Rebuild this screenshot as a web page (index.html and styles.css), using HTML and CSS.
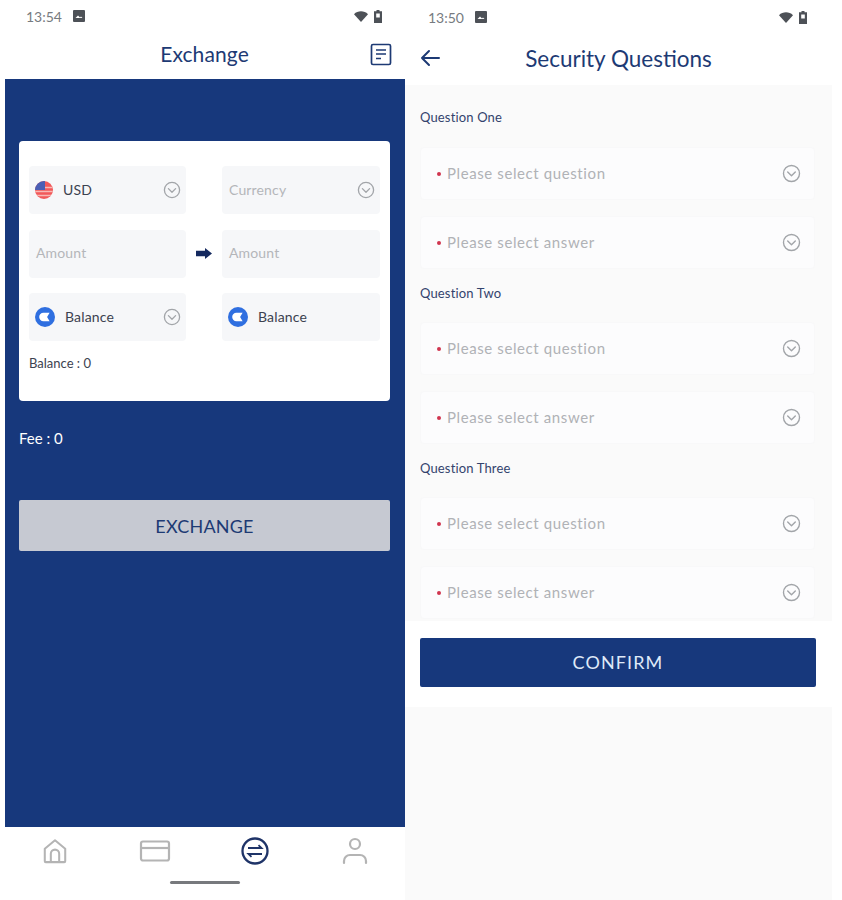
FILE: index.html
```html
<!DOCTYPE html>
<html lang="en">
<head>
  <meta charset="UTF-8" />
  <meta name="viewport" content="width=device-width, initial-scale=1" />
  <title>Exchange and Security Questions</title>
  <link rel="stylesheet" href="styles.css">
</head>
<body>
  <svg class="defs" width="0" height="0">
    <symbol id="chev" viewBox="0 0 18 18">
      <circle cx="9" cy="9" r="7.6" fill="none" stroke="currentColor" stroke-width="1.3"/>
      <path d="M5.4 7.6 9 11.2l3.6-3.6" fill="none" stroke="currentColor" stroke-width="1.3" stroke-linecap="round" stroke-linejoin="round"/>
    </symbol>
    <symbol id="coin" viewBox="0 0 20 20">
      <circle cx="10" cy="10" r="10" fill="#2f6fe0"/>
      <path d="M14.6 5.8H8.4a4.2 4.2 0 0 0 0 8.4h6.2l-2.5-4.2z" fill="#fff"/>
    </symbol>
    <symbol id="wifi" viewBox="0 0 14 11">
      <path d="M0 3.2C3.8-.6 10.200-.6 14 3.200L7 11z" fill="currentColor"/>
    </symbol>
    <symbol id="battery" viewBox="0 0 8 13">
      <path d="M2.500 0h3v1.300H8V13H0V1.300h2.500z" fill="currentColor"/>
      <rect x="2.200" y="3.500" width="3.600" height="4" fill="#fff"/>
    </symbol>
    <symbol id="picture" viewBox="0 0 12 12">
      <path d="M1 0h10a1 1 0 0 1 1 1v10a1 1 0 0 1-1 1H1a1 1 0 0 1-1-1V1a1 1 0 0 1 1-1z" fill="currentColor"/>
      <path d="M2.500 8 5 5.500 7 7.500l1-1L9.500 8z" fill="#fff"/>
    </symbol>
  </svg>

  <div class="screen screen-exchange">
    <div class="status status-left">
      <span class="time">13:54</span>
      <svg class="status-pic"><use href="#picture"/></svg>
      <span class="status-gap"></span>
      <svg class="status-wifi"><use href="#wifi"/></svg>
      <svg class="status-bat"><use href="#battery"/></svg>
    </div>
    <div class="topbar">
      <h1 class="title title-small">Exchange</h1>
      <svg class="record-icon" width="22" height="23" viewBox="0 0 22 23">
        <rect x="1.500" y="1.500" width="19" height="20" rx="1.500" fill="none" stroke="#1d3a74" stroke-width="1.700"/>
        <path d="M6 7h10M6 11h10M6 15.500h5" stroke="#1d3a74" stroke-width="1.500"/>
      </svg>
    </div>

    <main class="blue">
      <div class="card">
        <div class="swap-grid">
          <div class="field">
            <svg class="flag" width="18" height="18" viewBox="0 0 18 18">
              <defs><clipPath id="round"><circle cx="9" cy="9" r="9"/></clipPath></defs>
              <g clip-path="url(#round)">
                <rect width="18" height="18" fill="#f2595a"/>
                <path d="M0 6.500h18M0 10.500h18M0 14.500h18" stroke="#f7b9b5" stroke-width="1.300"/>
                <rect width="10" height="9" fill="#4a5fb5"/>
              </g>
            </svg>
            <span class="value">USD</span>
            <svg class="chev"><use href="#chev"/></svg>
          </div>
          <span></span>
          <div class="field">
            <span class="hint">Currency</span>
            <svg class="chev"><use href="#chev"/></svg>
          </div>

          <div class="field"><span class="hint">Amount</span></div>
          <svg class="arrow" width="16" height="11" viewBox="0 0 16 11">
            <path d="M0 2.800h9V0l7 5.500-7 5.500V8.200H0z" fill="#14295f"/>
          </svg>
          <div class="field"><span class="hint">Amount</span></div>

          <div class="field">
            <svg class="coin"><use href="#coin"/></svg>
            <span class="value">Balance</span>
            <svg class="chev"><use href="#chev"/></svg>
          </div>
          <span></span>
          <div class="field">
            <svg class="coin"><use href="#coin"/></svg>
            <span class="value">Balance</span>
          </div>
        </div>
        <div class="balance">Balance : 0</div>
      </div>

      <div class="fee">Fee : 0</div>
      <button class="btn-exchange">EXCHANGE</button>
    </main>

    <nav class="bottom-nav">
      <div class="tabs">
        <svg width="26" height="28" viewBox="0 0 28 28" fill="none" stroke="#b4b4b4" stroke-width="2.200" stroke-linejoin="round">
          <path d="M3 11.500 14 2.500l11 9V25a1 1 0 0 1-1 1H4a1 1 0 0 1-1-1z"/>
          <path d="M9.500 26V17a4.500 4.500 0 0 1 9 0v9"/>
        </svg>
        <svg width="32" height="24" viewBox="0 0 32 24" fill="none" stroke="#b4b4b4" stroke-width="2.200">
          <rect x="2" y="2.500" width="28" height="19" rx="2"/>
          <path d="M2 9h28"/>
        </svg>
        <svg width="28" height="28" viewBox="0 0 28 28" fill="none" stroke="#1f3468" stroke-width="2">
          <circle cx="14" cy="14" r="12.500" stroke-width="2.300"/>
          <path d="M7 11h13.500l-3-2.800M21 17H7.500l3 2.800" stroke-width="1.800"/>
        </svg>
        <svg width="26" height="28" viewBox="0 0 26 28" fill="none" stroke="#b4b4b4" stroke-width="2.200">
          <circle cx="13" cy="7" r="5"/>
          <path d="M2 26v-2a6 6 0 0 1 6-6h10a6 6 0 0 1 6 6v2" stroke-linecap="round"/>
        </svg>
      </div>
      <div class="home-bar"></div>
    </nav>
  </div>

  <div class="screen screen-security">
    <div class="status status-right">
      <span class="time">13:50</span>
      <svg class="status-pic"><use href="#picture"/></svg>
      <span class="status-gap"></span>
      <svg class="status-wifi"><use href="#wifi"/></svg>
      <svg class="status-bat"><use href="#battery"/></svg>
    </div>
    <div class="topbar topbar-right">
      <svg class="back" width="20" height="18" viewBox="0 0 20 18" fill="none" stroke="#1d3a74" stroke-width="2" stroke-linecap="round" stroke-linejoin="round">
        <path d="M19 9H2M9 2 2 9l7 7"/>
      </svg>
      <h1 class="title title-right">Security Questions</h1>
    </div>

    <div class="questions">
      <div class="q-label q-label-first">Question One</div>
      <div class="q-field"><i></i><span>Please select question</span><svg class="chev"><use href="#chev"/></svg></div>
      <div class="q-field"><i></i><span>Please select answer</span><svg class="chev"><use href="#chev"/></svg></div>
      <div class="q-label">Question Two</div>
      <div class="q-field"><i></i><span>Please select question</span><svg class="chev"><use href="#chev"/></svg></div>
      <div class="q-field"><i></i><span>Please select answer</span><svg class="chev"><use href="#chev"/></svg></div>
      <div class="q-label">Question Three</div>
      <div class="q-field"><i></i><span>Please select question</span><svg class="chev"><use href="#chev"/></svg></div>
      <div class="q-field"><i></i><span>Please select answer</span><svg class="chev"><use href="#chev"/></svg></div>
    </div>

    <div class="confirm-band">
      <button class="btn-confirm">CONFIRM</button>
    </div>
    <div class="rest"></div>
  </div>
</body>
</html>
```

FILE: styles.css
```css
body {
  margin: 0;
  width: 842px;
  height: 900px;
  overflow: hidden;
  display: flex;
  background: #ffffff;
  font-family: "Lato", "Liberation Sans", sans-serif;
  color: #1d3a74;
}

.defs {
  display: block;
  width: 0;
  height: 0;
}

.screen {
  height: 900px;
  display: flex;
  flex-direction: column;
}
.screen-exchange {
  width: 405px;
}
.screen-security {
  width: 427px;
}

/* status bar */
.status {
  height: 35px;
  display: flex;
  align-items: center;
  color: #4d5157;
}
.status-left {
  padding: 0 23px 3px 26px;
  box-sizing: border-box;
}
.status-right {
  padding: 0 25px 1px 23px;
  box-sizing: border-box;
}
.time {
  font-size: 14px;
  color: #777b80;
}
.status-pic {
  width: 12px;
  height: 12px;
  margin-left: 11px;
}
.status-gap {
  flex: 1;
}
.status-wifi {
  width: 14px;
  height: 11px;
}
.status-bat {
  width: 8px;
  height: 13px;
  margin-left: 6px;
}

/* headers */
.topbar {
  height: 44px;
  display: flex;
  align-items: center;
  justify-content: center;
  position: relative;
}
.topbar-right {
  height: 50px;
}
.title {
  margin: 0;
  font-size: 23px;
  font-weight: 400;
  color: #1d3a74;
}
.title-small {
  font-size: 21px;
  margin: 0 0 8px 4px;
  letter-spacing: 0.1px;
}
.title-right {
  font-size: 22.5px;
  margin-bottom: 4px;
}
.record-icon {
  position: absolute;
  right: 13px;
  top: 8px;
}
.back {
  position: absolute;
  left: 15px;
  top: 14px;
}

/* exchange screen */
.blue {
  height: 748px;
  margin-left: 5px;
  padding: 62px 15px 0 14px;
  box-sizing: border-box;
  background: #17387c;
}
.card {
  height: 260px;
  padding: 25px 10px 0;
  box-sizing: border-box;
  background: #ffffff;
  border-radius: 4px;
}
.swap-grid {
  display: grid;
  grid-template-columns: 157px 36px 158px;
  grid-template-rows: 48px 48px 48px;
  row-gap: 15.5px;
  align-items: center;
  justify-items: center;
}
.field {
  width: 100%;
  height: 100%;
  display: flex;
  align-items: center;
  padding: 0 5px 0 6px;
  box-sizing: border-box;
  background: #f6f7f9;
  border-radius: 4px;
  font-size: 14px;
  letter-spacing: 0.15px;
}
.hint {
  color: #b4b6ba;
  margin: 0 auto 2px 1px;
}
.value {
  color: #3c4250;
  margin: 0 auto 2px 0;
}
.flag {
  margin-right: 10px;
}
.coin {
  width: 20px;
  height: 20px;
  margin-right: 10px;
}
.chev {
  width: 18px;
  height: 18px;
  color: #a2a5a9;
  flex-shrink: 0;
}
.balance {
  margin-top: 14px;
  font-size: 13px;
  color: #3c4250;
}
.fee {
  margin-top: 28px;
  font-size: 15px;
  color: #ffffff;
}
.btn-exchange {
  display: block;
  width: 100%;
  height: 51px;
  margin-top: 53px;
  border: 0;
  border-radius: 2px;
  background: #c6c9d2;
  color: #1d3a74;
  font-family: inherit;
  font-size: 18px;
  letter-spacing: 0.2px;
}

/* bottom nav */
.bottom-nav {
  flex: 1;
  display: flex;
  flex-direction: column;
  align-items: center;
}
.tabs {
  width: 100%;
  height: 48px;
  display: grid;
  grid-template-columns: repeat(4, 100px);
  justify-content: center;
  justify-items: center;
  align-items: center;
  box-sizing: border-box;
  margin-left: 5px;
}
.home-bar {
  width: 70px;
  height: 3px;
  margin-top: 6px;
  margin-left: 5px;
  background: #77797d;
  border-radius: 2px;
}

/* security questions */
.questions {
  height: 536px;
  padding: 0 17px 0 15px;
  box-sizing: border-box;
  background: #fafafa;
}
.q-label {
  height: 37px;
  line-height: 16px;
  font-size: 13px;
  letter-spacing: 0.15px;
  color: #33436d;
}
.q-label-first {
  height: 62px;
  padding-top: 24px;
  box-sizing: border-box;
}
.q-field {
  height: 53px;
  margin-bottom: 16px;
  padding: 0 13px 0 16px;
  display: flex;
  align-items: center;
  box-sizing: border-box;
  background: #fcfcfd;
  border: 1px solid #f8f8f9;
  border-radius: 4px;
  font-size: 15px;
  letter-spacing: 0.6px;
  color: #b0b2b6;
}
.q-field i {
  width: 4px;
  height: 4px;
  margin-right: 6px;
  border-radius: 50%;
  background: #d0354f;
}
.q-field span {
  flex: 1;
  margin-bottom: 2px;
}
.q-field .chev {
  width: 19px;
  height: 19px;
}
.confirm-band {
  height: 86px;
  padding: 17px 16px 0 15px;
  box-sizing: border-box;
  background: #ffffff;
}
.btn-confirm {
  display: block;
  width: 100%;
  height: 49px;
  padding-bottom: 3px;
  border: 0;
  border-radius: 2px;
  background: #17387c;
  color: #dfe9f8;
  font-family: inherit;
  font-size: 18px;
  letter-spacing: 1.1px;
}
.rest {
  flex: 1;
  background: #fafafa;
}
```
